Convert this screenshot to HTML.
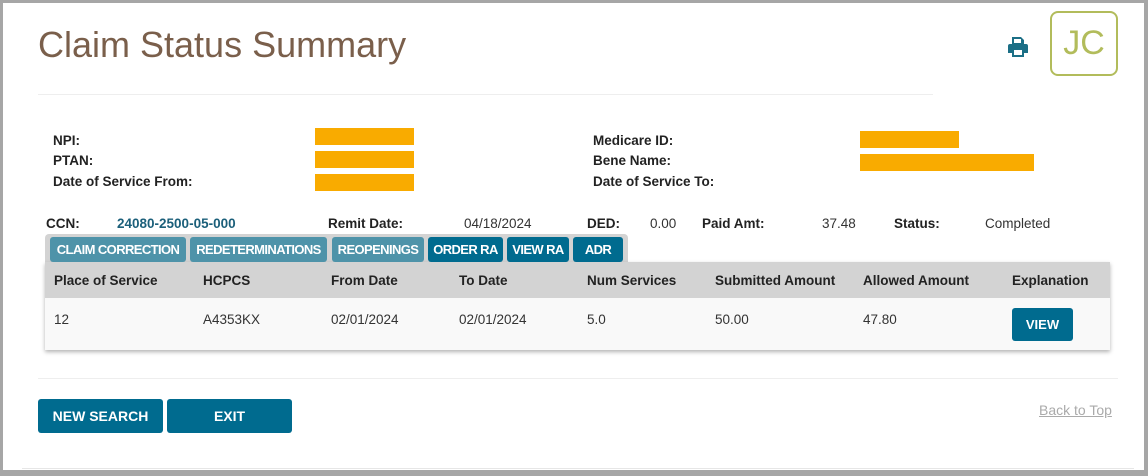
<!DOCTYPE html>
<html><head><style>
body{margin:0;width:1148px;height:476px;background:#a6a6a6;font-family:"Liberation Sans",sans-serif;position:relative;overflow:hidden}
#p{position:absolute;left:3px;top:3px;width:1141px;height:467px;background:#fff}
.a{position:absolute;white-space:nowrap}
.b{font-weight:bold;font-size:13.5px;color:#222}
.n{font-size:13.5px;color:#333}
.y{position:absolute;background:#f9ab00}
.tab{position:absolute;top:237px;height:25px;border-radius:3px;color:#fff;font-weight:bold;font-size:13px;line-height:25px;text-align:center;letter-spacing:-0.6px}
.l{background:#4e93a9}.d{background:#006b8f}
.btn{position:absolute;top:399px;height:34px;background:#006b8f;border-radius:3px;color:#fff;font-weight:bold;font-size:14px;line-height:34px;text-align:center}
</style></head><body>
<div id="p"></div>
<div class="a" style="left:38px;top:24px;font-size:36px;color:#7a5f4b">Claim Status Summary</div>
<svg class="a" style="left:1006px;top:35px" width="24" height="24" viewBox="0 0 24 24"><path d="M6 2h9l3 3v4H6z M4 9h16a2 2 0 0 1 2 2v7h-4v4H6v-4H2v-7a2 2 0 0 1 2-2z" fill="#1b6f86"/><rect x="8" y="15" width="8" height="5" fill="#fff"/><rect x="8" y="4" width="7" height="4" fill="#fff"/></svg>
<div class="a" style="left:1050px;top:11px;width:64px;height:61px;border:2px solid #b2bc5b;border-radius:8px;color:#b2bc5b;font-size:34px;line-height:61px;text-align:center">JC</div>
<div class="a" style="left:38px;top:94px;width:895px;height:1px;background:#eee"></div>
<div class="a b" style="left:53px;top:133px">NPI:</div>
<div class="a b" style="left:53px;top:153px">PTAN:</div>
<div class="a b" style="left:53px;top:174px">Date of Service From:</div>
<div class="y" style="left:315px;top:128px;width:99px;height:17px"></div>
<div class="y" style="left:315px;top:151px;width:99px;height:17px"></div>
<div class="y" style="left:315px;top:174px;width:99px;height:17px"></div>
<div class="a b" style="left:593px;top:133px">Medicare ID:</div>
<div class="a b" style="left:593px;top:153px">Bene Name:</div>
<div class="a b" style="left:593px;top:174px">Date of Service To:</div>
<div class="y" style="left:860px;top:131px;width:99px;height:17px"></div>
<div class="y" style="left:860px;top:154px;width:174px;height:17px"></div>
<div class="a b" style="left:46px;top:216px">CCN:</div>
<div class="a b" style="left:117px;top:216px;color:#1b5f7a">24080-2500-05-000</div>
<div class="a b" style="left:328px;top:216px">Remit Date:</div>
<div class="a n" style="left:464px;top:216px">04/18/2024</div>
<div class="a b" style="left:587px;top:216px">DED:</div>
<div class="a n" style="left:650px;top:216px">0.00</div>
<div class="a b" style="left:702px;top:216px">Paid Amt:</div>
<div class="a n" style="left:822px;top:216px">37.48</div>
<div class="a b" style="left:894px;top:216px">Status:</div>
<div class="a n" style="left:985px;top:216px">Completed</div>
<div class="a" style="left:45px;top:234px;width:583px;height:30px;background:#d3d3d3;border-radius:4px 4px 0 0"></div>
<div class="a" style="left:45px;top:262px;width:1065px;height:88px;box-shadow:0 2px 4px rgba(0,0,0,.3);background:#f9f9f9"></div>
<div class="a" style="left:45px;top:262px;width:1065px;height:36px;background:#d3d3d3"></div>
<div class="tab l" style="left:50px;width:136px">CLAIM CORRECTION</div>
<div class="tab l" style="left:190px;width:137px">REDETERMINATIONS</div>
<div class="tab l" style="left:332px;width:92px">REOPENINGS</div>
<div class="tab d" style="left:428px;width:75px">ORDER RA</div>
<div class="tab d" style="left:507px;width:62px">VIEW RA</div>
<div class="tab d" style="left:573px;width:50px">ADR</div>
<div class="a b" style="left:54px;top:273px">Place of Service</div>
<div class="a b" style="left:203px;top:273px">HCPCS</div>
<div class="a b" style="left:331px;top:273px">From Date</div>
<div class="a b" style="left:459px;top:273px">To Date</div>
<div class="a b" style="left:587px;top:273px">Num Services</div>
<div class="a b" style="left:715px;top:273px">Submitted Amount</div>
<div class="a b" style="left:863px;top:273px">Allowed Amount</div>
<div class="a b" style="left:1012px;top:273px">Explanation</div>
<div class="a n" style="left:54px;top:312px">12</div>
<div class="a n" style="left:203px;top:312px">A4353KX</div>
<div class="a n" style="left:331px;top:312px">02/01/2024</div>
<div class="a n" style="left:459px;top:312px">02/01/2024</div>
<div class="a n" style="left:587px;top:312px">5.0</div>
<div class="a n" style="left:715px;top:312px">50.00</div>
<div class="a n" style="left:863px;top:312px">47.80</div>
<div class="btn" style="left:1012px;top:308px;width:61px;height:33px;line-height:33px;font-size:13px">VIEW</div>
<div class="a" style="left:38px;top:378px;width:1080px;height:1px;background:#eee"></div>
<div class="btn" style="left:38px;width:125px">NEW SEARCH</div>
<div class="btn" style="left:167px;width:125px">EXIT</div>
<div class="a" style="left:1039px;top:402px;font-size:14px;color:#aaa;text-decoration:underline">Back to Top</div>
<div class="a" style="left:22px;top:468px;width:1112px;height:1px;background:#e6e6e6"></div>
</body></html>
